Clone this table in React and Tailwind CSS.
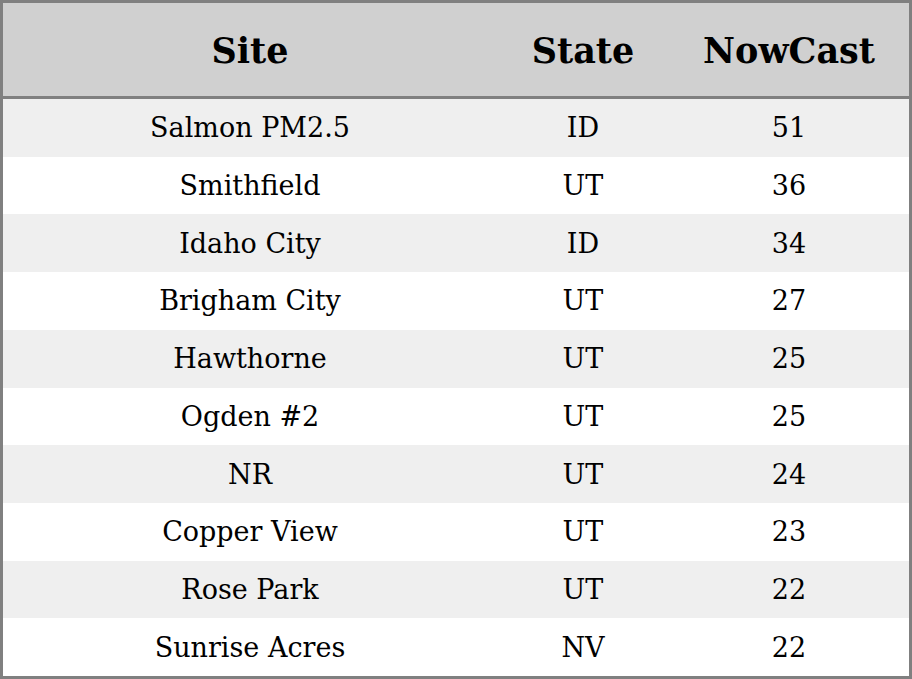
import React from "react";

const rows = [
  ["Salmon PM2.5", "ID", "51"],
  ["Smithfield", "UT", "36"],
  ["Idaho City", "ID", "34"],
  ["Brigham City", "UT", "27"],
  ["Hawthorne", "UT", "25"],
  ["Ogden #2", "UT", "25"],
  ["NR", "UT", "24"],
  ["Copper View", "UT", "23"],
  ["Rose Park", "UT", "22"],
  ["Sunrise Acres", "NV", "22"],
];

export default function App() {
  return (
    <div
      className="w-[912px] h-[679px] border-[3px] border-[#808080] flex flex-col bg-white text-black"
      style={{ fontFamily: '"DejaVu Serif", serif' }}
    >
      <div className="h-[96px] shrink-0 border-b-[3px] border-[#808080] bg-[#d0d0d0] grid grid-cols-[494px_172px_240px] items-center text-[35px] leading-none font-bold">
        <div className="text-center pt-[2px]">Site</div>
        <div className="text-center pt-[2px]">State</div>
        <div className="text-center pt-[2px]">NowCast</div>
      </div>
      <div className="flex-1 flex flex-col">
        {rows.map((r, i) => (
          <div
            key={i}
            className={`flex-1 grid grid-cols-[494px_172px_240px] items-center text-[27px] leading-none ${i % 2 === 0 ? "bg-[#efefef]" : "bg-white"}`}
          >
            <div className="text-center">{r[0]}</div>
            <div className="text-center">{r[1]}</div>
            <div className="text-center">{r[2]}</div>
          </div>
        ))}
      </div>
    </div>
  );
}
